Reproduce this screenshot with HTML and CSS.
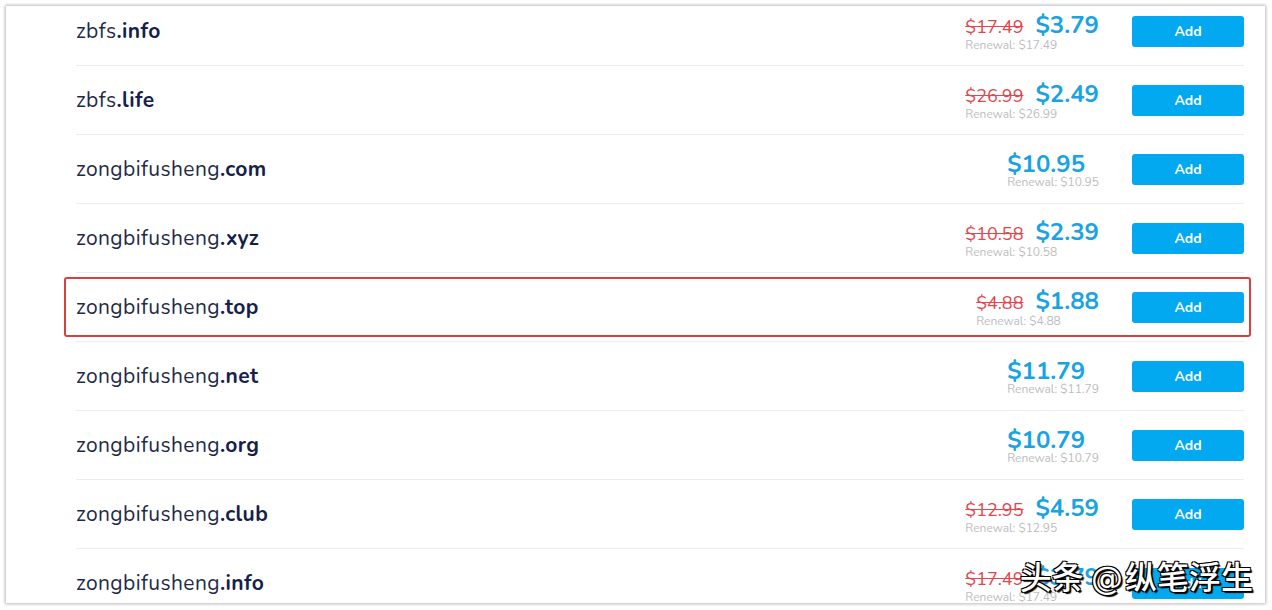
FILE: index.html
```html
<!DOCTYPE html>
<html>
<head>
<meta charset="utf-8">
<link rel="stylesheet" href="styles.css">
</head>
<body>
<div class="card">
  <ul class="list">
    <li class="row">
      <div class="domain">zbfs<b>.info</b></div>
      <div class="price"><div class="line"><s class="old">$17.49</s><span class="new">$3.79</span></div><div class="renew">Renewal: $17.49</div></div>
      <button class="add">Add</button>
    </li>
    <li class="row">
      <div class="domain">zbfs<b>.life</b></div>
      <div class="price"><div class="line"><s class="old">$26.99</s><span class="new">$2.49</span></div><div class="renew">Renewal: $26.99</div></div>
      <button class="add">Add</button>
    </li>
    <li class="row">
      <div class="domain">zongbifusheng<b>.com</b></div>
      <div class="price"><div class="line"><span class="new">$10.95</span></div><div class="renew">Renewal: $10.95</div></div>
      <button class="add">Add</button>
    </li>
    <li class="row">
      <div class="domain">zongbifusheng<b>.xyz</b></div>
      <div class="price"><div class="line"><s class="old">$10.58</s><span class="new">$2.39</span></div><div class="renew">Renewal: $10.58</div></div>
      <button class="add">Add</button>
    </li>
    <li class="row marked">
      <div class="domain">zongbifusheng<b>.top</b></div>
      <div class="price"><div class="line"><s class="old">$4.88</s><span class="new">$1.88</span></div><div class="renew">Renewal: $4.88</div></div>
      <button class="add">Add</button>
      <span class="mark"></span>
    </li>
    <li class="row">
      <div class="domain">zongbifusheng<b>.net</b></div>
      <div class="price"><div class="line"><span class="new">$11.79</span></div><div class="renew">Renewal: $11.79</div></div>
      <button class="add">Add</button>
    </li>
    <li class="row">
      <div class="domain">zongbifusheng<b>.org</b></div>
      <div class="price"><div class="line"><span class="new">$10.79</span></div><div class="renew">Renewal: $10.79</div></div>
      <button class="add">Add</button>
    </li>
    <li class="row">
      <div class="domain">zongbifusheng<b>.club</b></div>
      <div class="price"><div class="line"><s class="old">$12.95</s><span class="new">$4.59</span></div><div class="renew">Renewal: $12.95</div></div>
      <button class="add">Add</button>
    </li>
    <li class="row">
      <div class="domain">zongbifusheng<b>.info</b></div>
      <div class="price"><div class="line"><s class="old">$17.49</s><span class="new">$3.79</span></div><div class="renew">Renewal: $17.49</div></div>
      <button class="add">Add</button>
    </li>
  </ul>
  <div class="watermark">头条 <span class="at">@</span>纵笔浮生</div>
</div>
</body>
</html>
```

FILE: styles.css
```css
html, body {
  margin: 0;
  padding: 0;
  background: #ffffff;
}
body {
  font-family: "Nunito", "Lato", "Open Sans", sans-serif;
  padding: 6px 7px 7px 6px;
}
.card {
  position: relative;
  height: 597px;
  background: #fff;
  box-shadow: 0 0 3px 1px rgba(0,0,0,0.28);
  overflow: hidden;
}
.list {
  list-style: none;
  margin: -9px 21px 0 70px;
  padding: 0;
}
.row {
  position: relative;
  display: flex;
  align-items: center;
  height: 68px;
  border-bottom: 1px solid #ececec;
}
.domain {
  flex: 1;
  font-size: 21px;
  color: #1f2a48;
  letter-spacing: 0.4px;
}
.domain b {
  font-weight: 700;
  color: #15214a;
}
.price {
  display: flex;
  flex-direction: column;
  margin-right: 33px;
  padding-top: 1px;
}
.line {
  display: flex;
  align-items: baseline;
  gap: 12px;
  line-height: 24px;
}
.old {
  font-size: 18px;
  color: #e2474d;
}
.new {
  font-size: 24px;
  font-weight: 700;
  color: #1aa3e3;
}
.renew {
  font-size: 12px;
  line-height: 12px;
  color: #bdbdbd;
}
.add {
  width: 112px;
  height: 31px;
  border: none;
  border-radius: 3px;
  background: #03a9f0;
  color: #fff;
  font-family: "Nunito", "Lato", sans-serif;
  font-weight: 700;
  font-size: 14px;
  padding: 0;
}
.mark {
  position: absolute;
  left: -12px;
  right: -7px;
  top: 4px;
  bottom: 4px;
  border: 2px solid #d6403f;
  border-radius: 3px;
  pointer-events: none;
}
.watermark {
  position: absolute;
  right: 12px;
  bottom: 6px;
  font-family: "Noto Sans CJK SC", sans-serif;
  font-size: 32px;
  line-height: 38px;
  font-weight: 500;
  color: #fff;
  text-shadow: 1px 1px 0 #000, -1px 1px 0 #000, 1px -1px 0 #000, -1px -1px 0 #000, 2px 2px 1px #000;
}
.watermark .at {
  font-family: "DejaVu Sans", sans-serif;
  margin-right: 2px;
}
```
